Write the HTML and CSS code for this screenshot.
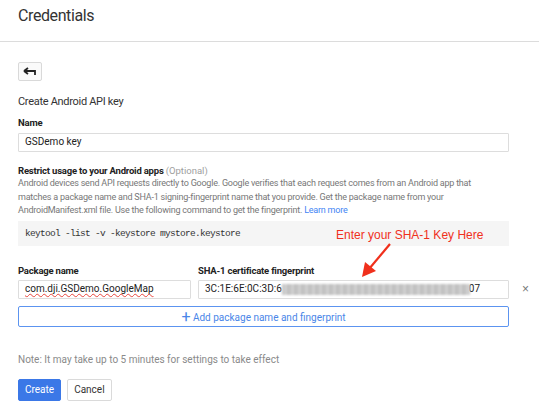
FILE: index.html
```html
<!DOCTYPE html>
<html>
<head>
<meta charset="utf-8">
<link rel="stylesheet" href="styles.css">
</head>
<body>
<header class="topbar">
  <h1 class="title">Credentials</h1>
</header>
<main class="content">
  <button class="back-btn" aria-label="Back">
    <svg width="14" height="10" viewBox="0 0 14 10"><path d="M1 4 L5 1 M1 4 L5 7 M1 4 H12 V8" fill="none" stroke="#222" stroke-width="1.8"/></svg>
  </button>
  <h2 class="section-title">Create Android API key</h2>

  <label class="label name-label">Name</label>
  <div class="input name-input">GSDemo key</div>

  <div class="restrict">
    <div class="label">Restrict usage to your Android apps <span class="optional">(Optional)</span></div>
    <p class="desc">Android devices send API requests directly to Google. Google verifies that each request comes from an Android app that<br>matches a package name and SHA-1 signing-fingerprint name that you provide. Get the package name from your<br>AndroidManifest.xml file. Use the following command to get the fingerprint. <a class="link">Learn more</a></p>
  </div>

  <div class="code-wrap">
    <div class="code">keytool -list -v -keystore mystore.keystore</div>
    <div class="annotation">Enter your SHA-1 Key Here</div>
    <svg class="arrow" width="34" height="36" viewBox="0 0 34 36"><path d="M30 2 L9 27" stroke="#f0301c" stroke-width="2.2" fill="none"/><path d="M2 35 L5 20 L16 29 Z" fill="#f0301c"/></svg>
  </div>

  <div class="fields">
    <div class="field">
      <div class="label">Package name</div>
      <div class="input pkg"><span class="spell">com.dji.GSDemo.GoogleMap</span></div>
    </div>
    <div class="field">
      <div class="label">SHA-1 certificate fingerprint</div>
      <div class="input sha">3C:1E:6E:0C:3D:6<span class="blur"></span>07</div>
    </div>
    <div class="remove">×</div>
  </div>

  <button class="add-btn"><span class="plus">+</span> Add package name and fingerprint</button>

  <p class="note">Note: It may take up to 5 minutes for settings to take effect</p>

  <div class="actions">
    <button class="btn primary">Create</button>
    <button class="btn">Cancel</button>
  </div>
</main>
</body>
</html>
```
FILE: styles.css
```css
* { box-sizing: border-box; }
body {
  margin: 0;
  font-family: Roboto, "Liberation Sans", Arial, sans-serif;
  color: #212121;
  background: #fff;
  width: 539px;
  height: 409px;
  overflow: hidden;
}
.topbar {
  height: 42px;
  border-bottom: 1px solid #dcdcdc;
  padding: 4px 18px 0;
}
.title {
  margin: 0;
  font-size: 16px;
  letter-spacing: -0.4px;
  font-weight: 400;
  color: #333;
  line-height: 24px;
}
.content {
  width: 509px;
  padding: 20px 0 0 18px;
}
.back-btn {
  display: flex;
  align-items: center;
  justify-content: center;
  width: 24px;
  height: 19px;
  padding: 0;
  border: 1px solid #d9d9d9;
  border-radius: 2px;
  background: #fafafa;
}
.section-title {
  margin: 13px 0 0;
  font-size: 11px;
  letter-spacing: -0.3px;
  font-weight: 400;
  color: #333;
  line-height: 16px;
}
.label {
  display: block;
  font-size: 9.5px;
  letter-spacing: -0.2px;
  font-weight: 700;
  color: #222;
  line-height: 14px;
}
.name-label { margin-top: 6px; }
.input {
  height: 19px;
  border: 1px solid #ddd;
  border-radius: 1px;
  padding: 0 6px;
  font-size: 10px;
  line-height: 16px;
  color: #222;
  margin-top: 3px;
  white-space: nowrap;
  overflow: hidden;
}
.restrict { margin-top: 12px; }
.optional { font-weight: 400; color: #9e9e9e; letter-spacing: 0; }
.desc {
  margin: -1px 0 0;
  font-size: 9px;
  letter-spacing: -0.22px;
  line-height: 13.5px;
  color: #777;
  white-space: nowrap;
}
.link { color: #4285f4; }
.code-wrap {
  position: relative;
  margin-top: 3px;
}
.code {
  background: #f5f5f5;
  height: 25px;
  padding: 0 7px;
  font-family: "Liberation Mono", "DejaVu Sans Mono", monospace;
  font-size: 9.5px;
  letter-spacing: -0.7px;
  line-height: 25px;
  color: #333;
}
.annotation {
  position: absolute;
  left: 318px;
  top: 6px;
  font-family: "Liberation Sans", Arial, sans-serif;
  font-size: 12px;
  color: #f0301c;
  line-height: 16px;
}
.arrow {
  position: absolute;
  left: 342px;
  top: 21px;
}
.fields {
  display: grid;
  grid-template-columns: 173px 311px 30px;
  column-gap: 7px;
  margin-top: 18px;
  width: 521px;
}
.field .input { margin-top: 2px; }
.sha { display: flex; align-items: center; }
.blur {
  display: inline-block;
  width: 188px;
  height: 11px;
  margin: 0 -1px 0 0;
  background: repeating-linear-gradient(90deg, #c6c6c6 0 3px, #d4d4d4 3px 5px, #bdbdbd 5px 7px);
  filter: blur(0.8px);
}
.pkg {
  line-height: 13px;
  padding-top: 1px;
}
.spell {
  text-decoration-line: underline;
  text-decoration-style: wavy;
  text-decoration-color: #e8453c;
  text-decoration-thickness: 1px;
  text-underline-offset: 1px;
  text-decoration-skip-ink: none;
}
.remove {
  align-self: end;
  height: 19px;
  line-height: 19px;
  padding-left: 6px;
  font-size: 12px;
  color: #777;
  font-family: "Liberation Sans", Arial, sans-serif;
}
.add-btn {
  display: block;
  width: 491px;
  height: 21px;
  margin-top: 7px;
  padding: 0;
  border: 1px solid #5c94f0;
  border-radius: 2px;
  background: #fff;
  color: #4a86e8;
  font-family: Roboto, "Liberation Sans", Arial, sans-serif;
  font-size: 10px;
  line-height: 19px;
}
.plus { font-size: 16px; font-weight: 400; vertical-align: -1px; }
.note {
  margin: 26px 0 0;
  font-size: 10px;
  color: #8a8a8a;
  line-height: 14px;
}
.actions {
  display: flex;
  gap: 6px;
  margin-top: 12px;
}
.btn {
  height: 22px;
  padding: 0 6px;
  border: 1px solid #dadada;
  border-radius: 2px;
  background: #fff;
  font-family: Roboto, "Liberation Sans", Arial, sans-serif;
  font-size: 10px;
  color: #333;
}
.btn.primary {
  background: #3b78e7;
  border-color: #3b78e7;
  color: #fff;
}
```
